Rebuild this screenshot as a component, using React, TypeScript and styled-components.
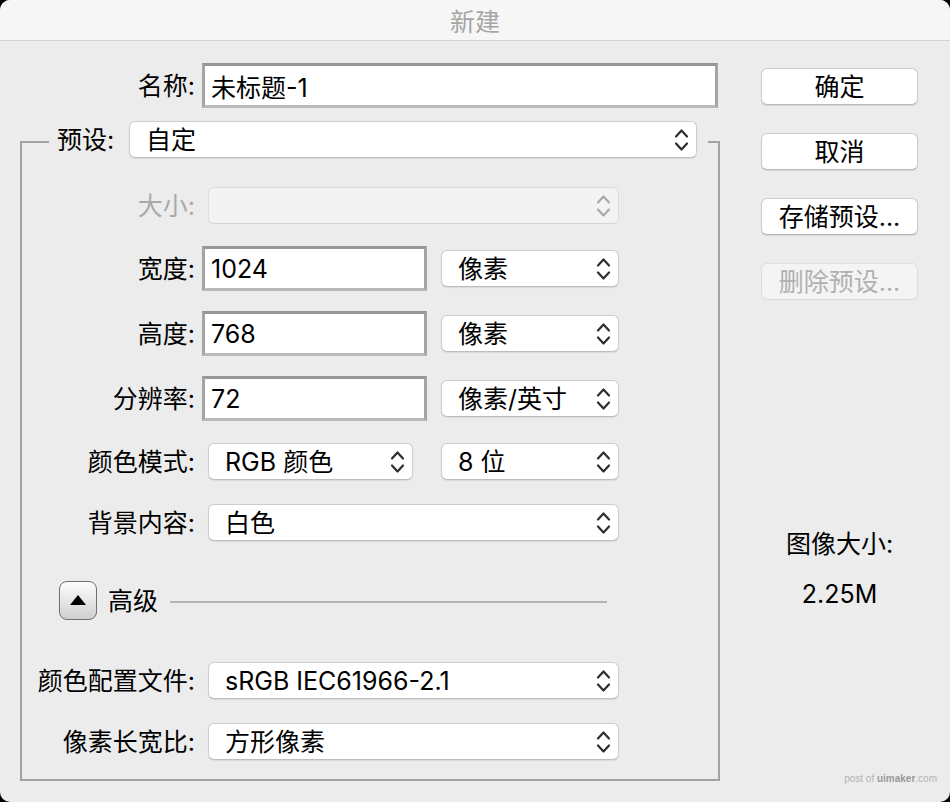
import React from "react";
import styled, { createGlobalStyle } from "styled-components";

const GlobalStyle = createGlobalStyle`
  html, body {
    margin: 0;
    padding: 0;
    background: #000;
  }
  body {
    font-family: Inter, "Noto Sans CJK SC", sans-serif;
  }
`;

const Chevrons = ({ disabled }: { disabled?: boolean }) => (
  <svg width="15" height="26" viewBox="0 0 15 26" fill="none">
    <path
      d="M2 9.5 L7.5 3.5 L13 9.5 M2 16.5 L7.5 22.5 L13 16.5"
      stroke={disabled ? "#a8a8a8" : "#2e2e2e"}
      strokeWidth="2.2"
      strokeLinecap="round"
      strokeLinejoin="round"
    />
  </svg>
);

const Select = ({
  value,
  width,
  ml,
  disabled,
}: {
  value?: string;
  width: number;
  ml: number;
  disabled?: boolean;
}) => (
  <SelectBox $width={width} $ml={ml} $disabled={disabled}>
    <SelectText>{value}</SelectText>
    <Chevrons disabled={disabled} />
  </SelectBox>
);

const App = () => {
  return (
    <>
      <GlobalStyle />
      <Window>
        <TitleBar>新建</TitleBar>
        <Body>
          <LeftColumn>
            <NameRow>
              <Label $width={175}>名称:</Label>
              <TextInput $width={516} $ml={7}>
                未标题-1
              </TextInput>
            </NameRow>
            <Group>
              <Legend>
                <LegendInner>
                  <LegendLabel>预设:</LegendLabel>
                  <Select value="自定" width={568} ml={0} />
                </LegendInner>
              </Legend>

              <Row $mt={20}>
                <Label $width={173} $disabled>
                  大小:
                </Label>
                <Select width={411} ml={13} disabled />
              </Row>
              <Row $mt={18}>
                <Label $width={173}>宽度:</Label>
                <TextInput $width={225} $ml={7}>
                  1024
                </TextInput>
                <Select value="像素" width={178} ml={14} />
              </Row>
              <Row $mt={20}>
                <Label $width={173}>高度:</Label>
                <TextInput $width={225} $ml={7}>
                  768
                </TextInput>
                <Select value="像素" width={178} ml={14} />
              </Row>
              <Row $mt={20}>
                <Label $width={173}>分辨率:</Label>
                <TextInput $width={225} $ml={7}>
                  72
                </TextInput>
                <Select value="像素/英寸" width={178} ml={14} />
              </Row>
              <Row $mt={18}>
                <Label $width={173}>颜色模式:</Label>
                <Select value="RGB 颜色" width={205} ml={13} />
                <Select value="8 位" width={178} ml={28} />
              </Row>
              <Row $mt={16}>
                <Label $width={173}>背景内容:</Label>
                <Select value="白色" width={411} ml={13} />
              </Row>

              <AdvancedRow>
                <DisclosureButton>
                  <svg width="16" height="10" viewBox="0 0 16 10">
                    <path d="M8 0 L16 10 L0 10 Z" fill="#000" />
                  </svg>
                </DisclosureButton>
                <AdvancedLabel>高级</AdvancedLabel>
                <Divider />
              </AdvancedRow>

              <Row $mt={35}>
                <Label $width={173}>颜色配置文件:</Label>
                <Select value="sRGB IEC61966-2.1" width={411} ml={13} />
              </Row>
              <Row $mt={16}>
                <Label $width={173}>像素长宽比:</Label>
                <Select value="方形像素" width={411} ml={13} />
              </Row>
            </Group>
          </LeftColumn>

          <RightColumn>
            <Button>确定</Button>
            <Button>取消</Button>
            <Button>存储预设...</Button>
            <Button $disabled>删除预设...</Button>
            <SizeTitle>图像大小:</SizeTitle>
            <SizeValue>2.25M</SizeValue>
          </RightColumn>
        </Body>
        <Watermark>
          post of <b>uimaker</b>.com
        </Watermark>
      </Window>
    </>
  );
};

export default App;

const Window = styled.div`
  position: relative;
  width: 950px;
  height: 802px;
  display: flex;
  flex-direction: column;
  background: #ececec;
  border-radius: 10px;
  overflow: hidden;
  color: #000;
  font-size: 25px;
`;

const TitleBar = styled.div`
  height: 40px;
  flex-shrink: 0;
  display: flex;
  align-items: center;
  justify-content: center;
  background: #f6f6f6;
  border-bottom: 1px solid #d2d2d2;
  color: #a6a6a6;
  font-size: 25px;
`;

const Body = styled.div`
  display: flex;
  padding-left: 20px;
`;

const LeftColumn = styled.div`
  width: 700px;
  display: flex;
  flex-direction: column;
`;

const NameRow = styled.div`
  display: flex;
  align-items: center;
  height: 45px;
  margin-top: 22px;
`;

const Row = styled.div<{ $mt: number }>`
  display: flex;
  align-items: center;
  height: 45px;
  margin-top: ${(p) => p.$mt}px;
`;

const Label = styled.div<{ $width: number; $disabled?: boolean }>`
  width: ${(p) => p.$width}px;
  flex-shrink: 0;
  text-align: right;
  font-size: 25px;
  line-height: 32px;
  color: ${(p) => (p.$disabled ? "#a9a9a9" : "#000")};
  white-space: nowrap;
`;

const TextInput = styled.div<{ $width: number; $ml: number }>`
  box-sizing: border-box;
  width: ${(p) => p.$width}px;
  height: 45px;
  margin-left: ${(p) => p.$ml}px;
  padding: 0 6px;
  display: flex;
  align-items: center;
  background: #fff;
  border: 3px solid #a4a4a4;
  border-top-color: #979797;
  border-bottom-color: #b9b9b9;
  font-size: 25px;
  white-space: nowrap;
`;

const SelectBox = styled.div<{
  $width: number;
  $ml: number;
  $disabled?: boolean;
}>`
  box-sizing: border-box;
  width: ${(p) => p.$width}px;
  height: 37px;
  margin-left: ${(p) => p.$ml}px;
  padding: 0 7px 0 16px;
  display: flex;
  align-items: center;
  justify-content: space-between;
  flex-shrink: 0;
  background: ${(p) => (p.$disabled ? "#f3f3f3" : "#fff")};
  border: 1px solid ${(p) => (p.$disabled ? "#dcdcdc" : "#cdcdcd")};
  border-bottom-color: ${(p) => (p.$disabled ? "#d6d6d6" : "#bdbdbd")};
  border-radius: 6px;
  box-shadow: ${(p) =>
    p.$disabled ? "none" : "0 1px 1px rgba(0, 0, 0, 0.08)"};
`;

const SelectText = styled.span`
  font-size: 25px;
  line-height: 32px;
  white-space: nowrap;
`;

const Group = styled.fieldset`
  margin: 13px 0 0 0;
  padding: 0 0 15px 0;
  min-inline-size: 0;
  border: 2px solid #a3a3a3;
`;

const Legend = styled.legend`
  margin-left: 27px;
  padding: 0 11px 5px 8px;
`;

const LegendInner = styled.div`
  display: flex;
  align-items: center;
  height: 37px;
`;

const LegendLabel = styled.span`
  width: 61px;
  margin-right: 11px;
  font-size: 25px;
  line-height: 32px;
  white-space: nowrap;
`;

const AdvancedRow = styled.div`
  display: flex;
  align-items: center;
  height: 45px;
  margin-top: 33px;
  padding-left: 37px;
`;

const DisclosureButton = styled.div`
  box-sizing: border-box;
  width: 38px;
  height: 39px;
  display: flex;
  align-items: center;
  justify-content: center;
  padding-bottom: 2px;
  border: 1.5px solid #6e6e6e;
  border-radius: 8px;
  background: linear-gradient(#fdfdfd, #e2e2e2 60%, #cfcfcf);
  box-shadow: inset 0 1px 0 #fff;
`;

const AdvancedLabel = styled.span`
  margin-left: 11px;
  font-size: 25px;
  line-height: 32px;
`;

const Divider = styled.div`
  width: 437px;
  height: 2px;
  margin-left: 12px;
  margin-top: 2px;
  background: #b4b4b4;
`;

const RightColumn = styled.div`
  width: 157px;
  margin-left: 41px;
  margin-top: 27px;
  display: flex;
  flex-direction: column;
  gap: 28px;
  align-items: stretch;
`;

const Button = styled.div<{ $disabled?: boolean }>`
  box-sizing: border-box;
  height: 37px;
  padding-bottom: 3px;
  display: flex;
  align-items: center;
  justify-content: center;
  font-size: 25px;
  white-space: nowrap;
  border-radius: 6px;
  background: ${(p) => (p.$disabled ? "#f4f4f4" : "#fff")};
  color: ${(p) => (p.$disabled ? "#b0b0b0" : "#000")};
  border: 1px solid ${(p) => (p.$disabled ? "#dedede" : "#cbcbcb")};
  border-bottom-color: ${(p) => (p.$disabled ? "#d8d8d8" : "#b8b8b8")};
  box-shadow: ${(p) =>
    p.$disabled ? "none" : "0 1px 1px rgba(0, 0, 0, 0.1)"};
`;

const SizeTitle = styled.div`
  margin-top: 200px;
  text-align: center;
  font-size: 25px;
  line-height: 32px;
`;

const SizeValue = styled.div`
  margin-top: -10px;
  text-align: center;
  font-size: 25px;
  line-height: 32px;
`;

const Watermark = styled.div`
  position: absolute;
  right: 13px;
  bottom: 18px;
  font-family: "Liberation Sans", sans-serif;
  font-size: 10px;
  color: #b4b4b4;
  b {
    color: #9a9a9a;
  }
`;
